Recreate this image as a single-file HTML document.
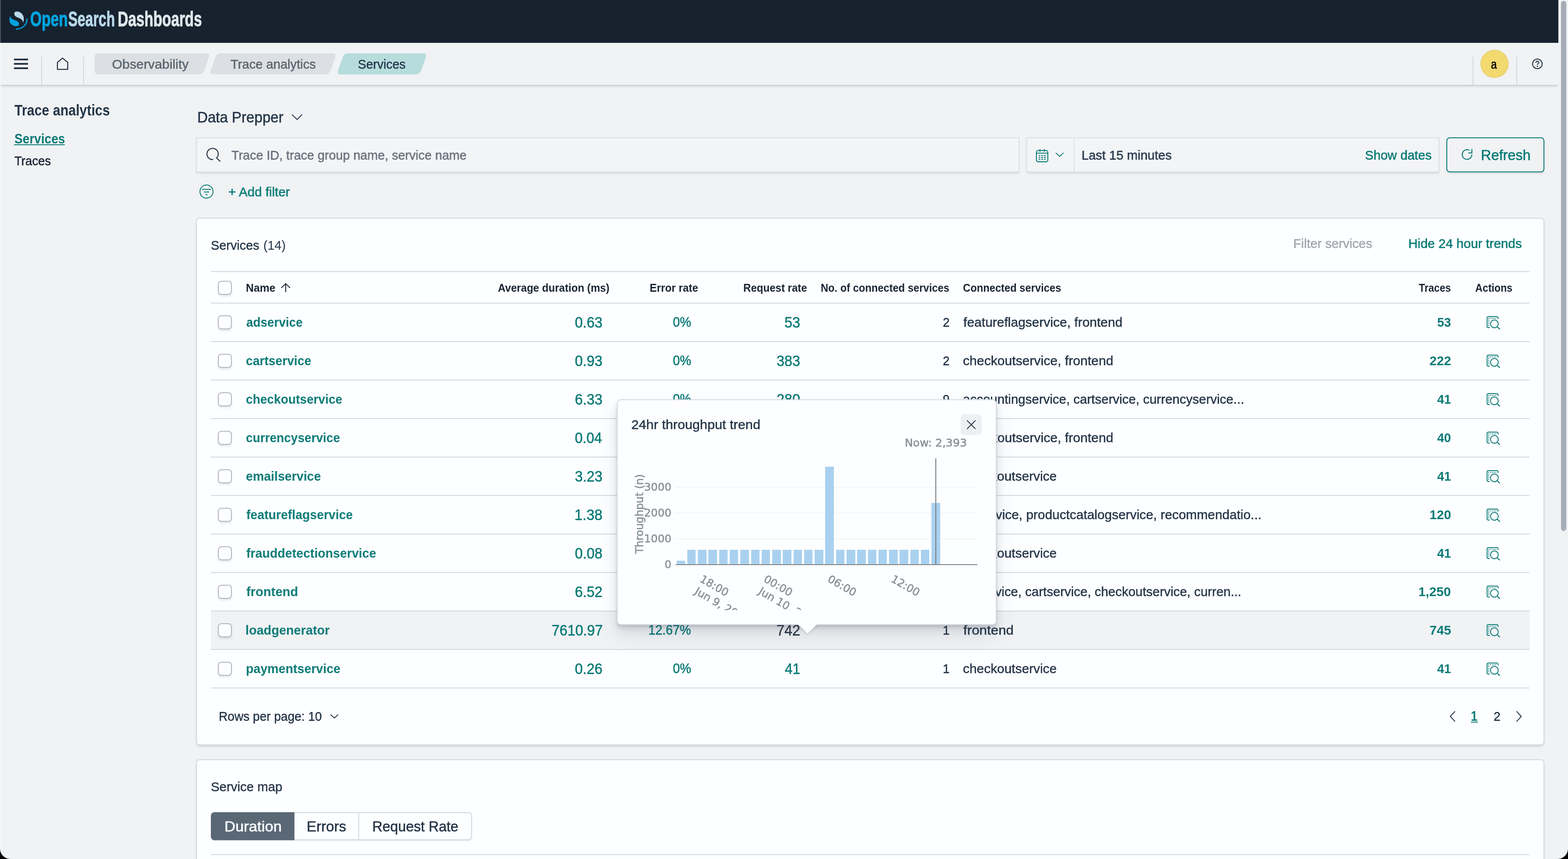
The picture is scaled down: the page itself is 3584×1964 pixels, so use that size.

<!DOCTYPE html>
<html lang="en">
<head>
<meta charset="utf-8">
<title>Services - Trace analytics - OpenSearch Dashboards</title>
<style>
html,body{margin:0;padding:0;}
body{width:3584px;height:1964px;overflow:hidden;position:relative;background:#f0f2f4;font-family:"Liberation Sans",sans-serif;color:#2a3947;}
*{box-sizing:border-box;}
#app{position:absolute;left:0;top:0;width:3584px;height:1964px;overflow:hidden;will-change:transform;transform:translateZ(0);}
.abs,.t,svg.i{position:absolute;}
.t{white-space:nowrap;display:block;margin:0;padding:0;font-weight:400;text-decoration:none;transform-origin:0 50%;}
.u{text-decoration:underline;text-decoration-thickness:2px;text-underline-offset:4px;}
#hdr1{position:absolute;left:0;top:0;width:3562px;height:98px;background:#17222f;}
#hdr1line{position:absolute;left:0;top:98px;width:3562px;height:1px;background:#fdfdfe;}
#hdr2{position:absolute;left:0;top:99px;width:3562px;height:95px;background:#f0f2f4;box-shadow:0 3px 4px -1px rgba(120,130,142,.32),0 2px 10px -3px rgba(120,130,142,.28);}
.vdiv{position:absolute;width:2px;background:#d3d7dc;top:130px;height:64px;}
.bc{position:absolute;top:122px;height:48px;}
.bc i{position:absolute;top:0;bottom:0;border-radius:8px;background:#dcdfe3;}
.bc.last i{background:#b7dcdc;}
.field{position:absolute;top:314px;height:80px;background:#f3f4f6;border:2px solid #dbe1e5;box-shadow:0 3px 3px -1px rgba(120,130,145,.16),0 5px 8px -3px rgba(120,130,145,.12);}
.panel{position:absolute;left:448px;width:3082px;background:#fdfeff;border:2px solid #d4d8dd;border-radius:8px;box-shadow:0 3px 4px -1px rgba(120,130,145,.22),0 6px 10px -6px rgba(120,130,145,.16);}
.hl{position:absolute;left:482px;width:3014px;height:2px;background:#d3d7dc;}
.cb{position:absolute;left:498px;width:32px;height:32px;border:2px solid #b3b6bd;border-radius:8px;background:#fdfeff;box-shadow:0 4px 5px -1px rgba(120,130,145,.22);}
.rowhl{position:absolute;left:482px;width:3014px;background:#f0f2f4;}
#pop{position:absolute;left:1410px;top:913px;width:868px;height:516px;background:#fdfeff;border:2px solid #d7dbe2;border-radius:9px;box-shadow:0 24px 48px 0 rgba(65,78,101,.10),0 12px 24px 0 rgba(65,78,101,.10),0 8px 8px 0 rgba(65,78,101,.10),0 4px 4px 0 rgba(65,78,101,.10);}
#poparrow{position:absolute;left:1824px;top:1427px;width:0;height:0;border-left:22px solid transparent;border-right:22px solid transparent;border-top:22px solid #fdfeff;filter:drop-shadow(0 3px 2px rgba(65,78,101,.18));}
#close{position:absolute;left:2196px;top:947px;width:48px;height:48px;border-radius:9px;background:#edf0f3;}
.bar{position:absolute;background:#a9d1ef;}
.xt{width:0;height:0;transform:rotate(30deg);transform-origin:0 0;font-family:'DejaVu Sans',sans-serif;font-size:24.5px;line-height:31px;color:#8a9499;white-space:nowrap;-webkit-text-stroke:0.7px #8a9499;}
.grid{position:absolute;left:1544px;width:690px;height:2px;background:#f3f4f6;}
.seg{position:absolute;top:1857px;height:64px;border:2px solid #d3d7dd;background:#fdfeff;box-shadow:0 3px 3px -1px rgba(120,130,145,.18);}
#sbtrack{position:absolute;left:3562px;top:0;width:22px;height:1964px;background:#f0f2f4;}
#sbthumb{position:absolute;left:3568px;top:2px;width:12px;height:1212px;border-radius:6px;background:#a6acb5;}
</style>
</head>
<body>
<div id="app">

<header id="hdr1"></header><div id="hdr1line"></div>
<div class="abs" style="left:0;top:0;width:2px;height:98px;background:#45515c"></div>
<svg class="i" style="left:20px;top:25px" width="44" height="44" viewBox="0 0 44 44">
<path transform="translate(0.7 0)" d="M13.5 2.2 C19 -0.5 27.5 2.5 31.5 9.5 C34.5 15 34.3 21.5 32 26.5 C31.2 21 28 18.5 23.5 16.5 C18.5 14.3 13.5 13 12.3 8.5 C11.7 6 12 3.5 13.5 2.2 Z" fill="#b9d9eb"/>
<path transform="translate(0.9 0.97) scale(1 0.912)" d="M3.5 11 C2.5 15 5 18.5 9.5 20.7 C14.5 23 20.5 24.5 22.3 29 C23.5 32 22.3 35 19.8 36.3 C13 38.6 5 35 2 28 C-0.3 22.5 0.3 16 3.5 11 Z" fill="#00a3e0"/>
<path d="M41.8 18 C42.3 30.6 32 41.2 17.4 41.7" fill="none" stroke="#00a3e0" stroke-width="2.7" stroke-linecap="round"/>
</svg>
<div class="abs" id="logotext" style="left:70px;top:0;height:98px;width:400px;font-weight:700;font-size:48px;line-height:56px;white-space:nowrap;-webkit-text-stroke:1.1px currentColor"><span class="abs lg" style="left:-1.22px;top:16.2px;color:#00a3e0;transform-origin:0 0;transform:scaleX(0.7007)">Open</span><span class="abs lg" style="left:85.50px;top:16.2px;color:#b9d9eb;transform-origin:0 0;transform:scaleX(0.6663)">Search</span><span class="abs lg" style="left:199.20px;top:16.2px;color:#dfe7ea;transform-origin:0 0;transform:scaleX(0.6939)">Dashboards</span></div>
<nav id="hdr2"></nav>
<div class="abs" style="left:0;top:99px;width:2px;height:1865px;background:#f5f6f8"></div>
<svg class="i" style="left:32px;top:134px" width="32" height="24" viewBox="0 0 32 24"><path d="M0 0h32v4H0zM0 10h32v4H0zM0 20h32v4H0z" fill="#253546"/></svg>
<div class="vdiv" style="left:94px"></div><div class="vdiv" style="left:190px"></div>
<svg class="i" style="left:128px;top:130px" width="30" height="32" viewBox="0 0 30 32"><path d="M3.2 28.6 V12.6 L15 2.9 L26.8 12.6 V28.6 Z" fill="none" stroke="#1f2f40" stroke-width="2.3" stroke-linejoin="round"/></svg>
<div class="bc" style="left:216px;width:263.6px"><i style="left:8.5px;right:8.5px;transform:skewX(-19.5deg)"></i><i style="left:0;width:60px"></i></div>
<div class="bc" style="left:478.7px;width:291.34999999999997px"><i style="left:8.5px;right:8.5px;transform:skewX(-19.5deg)"></i></div>
<div class="bc last" style="left:769.2px;width:206.69999999999993px"><i style="left:8.5px;right:8.5px;transform:skewX(-19.5deg)"></i></div>
<span class="t" style="left:255.79px;top:129px;font-size:30px;line-height:36px;transform:scaleX(1.0105);-webkit-text-stroke:0.51px currentColor;color:#59636e;">Observability</span>
<span class="t" style="left:527.40px;top:129px;font-size:30px;line-height:36px;transform:scaleX(0.9713);-webkit-text-stroke:0.51px currentColor;color:#59636e;">Trace analytics</span>
<span class="t" style="left:818.15px;top:129px;font-size:30px;line-height:36px;transform:scaleX(0.9484);-webkit-text-stroke:0.51px currentColor;color:#243548;">Services</span>
<div class="vdiv" style="left:3366px"></div><div class="vdiv" style="left:3466px"></div>
<div class="abs" style="left:3384px;top:114px;width:64px;height:64px;border-radius:50%;background:#f2d970;box-shadow:inset 0 0 0 1.5px rgba(200,170,40,.25)"></div>
<span class="t" style="left:3408.44px;top:129px;font-size:29.5px;line-height:35px;transform:scaleX(0.8063);-webkit-text-stroke:0.7px currentColor;color:#000;">a</span>
<svg class="i" style="left:3500px;top:132px" width="28" height="28" viewBox="0 0 28 28"><circle cx="14" cy="14" r="11" fill="none" stroke="#1f2f40" stroke-width="2"/><path d="M10.6 11.2 C10.6 9 12.1 7.9 14 7.9 C15.9 7.9 17.4 9 17.4 10.9 C17.4 13.3 14 13.3 14 16.2" fill="none" stroke="#1f2f40" stroke-width="2"/><circle cx="14" cy="19.6" r="1.5" fill="#1f2f40"/></svg>
<h2 class="t" style="left:32.70px;top:231px;font-size:35px;line-height:42px;transform:scaleX(0.8693);font-weight:700;color:#243548;">Trace analytics</h2>
<span class="t" style="left:32.75px;top:299px;font-size:30.5px;line-height:37px;transform:scaleX(0.9218);font-weight:700;color:#0a7a76;">Services</span>
<div class="abs" style="left:32px;top:330px;width:116px;height:2px;background:#0a7a76"></div>
<span class="t" style="left:32.75px;top:350px;font-size:30px;line-height:36px;transform:scaleX(0.9211);-webkit-text-stroke:0.51px currentColor;color:#16202e;">Traces</span>
<h1 class="t" style="left:450.68px;top:248px;font-size:34.5px;line-height:41px;transform:scaleX(0.9585);-webkit-text-stroke:0.59px currentColor;color:#243548;">Data Prepper</h1>
<svg class="i" style="left:664px;top:258px" width="30" height="20" viewBox="0 0 30 20"><path d="M3.9 4.5 L15 15.2 L26.1 4.5" fill="none" stroke="#243548" stroke-width="2" stroke-linejoin="round" stroke-linecap="round"/></svg>
<div class="field" style="left:448px;width:1882px"></div>
<svg class="i" style="left:470px;top:336px" width="36" height="36" viewBox="0 0 36 36"><path d="M17.2 28.85 A12.9 12.9 0 1 1 25.6 24.6" fill="none" stroke="#1f2f40" stroke-width="2.2"/><path d="M24.2 24.5 L33.6 33.2" fill="none" stroke="#1f2f40" stroke-width="2.2"/></svg>
<span class="t" style="left:528.50px;top:337px;font-size:30px;line-height:36px;transform:scaleX(0.9586);-webkit-text-stroke:0.51px currentColor;color:#666e7a;">Trace ID, trace group name, service name</span>
<div class="field" style="left:2346px;width:944px"></div>
<div class="abs" style="left:2454px;top:316px;width:2px;height:76px;background:#dde1e7"></div>
<svg class="i" style="left:2366px;top:339px" width="32" height="34" viewBox="0 0 32 34"><rect x="2.95" y="4.95" width="26.1" height="25.9" rx="4" fill="none" stroke="#0a7a76" stroke-width="2.1"/><path d="M3 11.2h26M11 2.1v5.8M21 2.1v5.8" fill="none" stroke="#0a7a76" stroke-width="2.1"/><path d="M8 17h4M14.05 17h4M20.1 17h4M8 21h4M14.05 21h4M20.1 21h4M8 25h4M14.05 25h4M20.1 25h4" fill="none" stroke="#0a7a76" stroke-width="2.1"/></svg>
<svg class="i" style="left:2410px;top:346px" width="24" height="16" viewBox="0 0 24 16"><path d="M3.6 3.9 L12 11.5 L20.4 3.9" fill="none" stroke="#0a7a76" stroke-width="1.9" stroke-linejoin="round" stroke-linecap="round"/></svg>
<span class="t" style="left:2471.65px;top:337px;font-size:30px;line-height:36px;transform:scaleX(0.9737);-webkit-text-stroke:0.51px currentColor;color:#243548;">Last 15 minutes</span>
<span class="t" style="left:3120.03px;top:337px;font-size:30px;line-height:36px;transform:scaleX(0.9711);-webkit-text-stroke:0.65px currentColor;color:#0a7a76;">Show dates</span>
<div class="abs" style="left:3306px;top:314px;width:224px;height:80px;border:2px solid #0a7a76;border-radius:8px;background:#f0f2f4;box-shadow:0 3px 4px -1px rgba(130,140,158,.3)"></div>
<svg class="i" style="left:3339px;top:338px" width="30" height="30" viewBox="0 0 30 30"><path d="M25.2 15.5 A11 11 0 1 1 19.5 5.6" fill="none" stroke="#0a7a76" stroke-width="2.2"/><path d="M17.2 11.6 H25.3 V2.6" fill="none" stroke="#0a7a76" stroke-width="2.2"/></svg>
<span class="t" style="left:3385.19px;top:334px;font-size:34px;line-height:41px;transform:scaleX(0.9527);-webkit-text-stroke:0.65px currentColor;color:#0a7a76;">Refresh</span>
<svg class="i" style="left:454px;top:420px" width="36" height="36" viewBox="0 0 36 36"><circle cx="18" cy="18" r="15" fill="none" stroke="#0a7a76" stroke-width="2"/><path d="M8 13h20M12 19h12M15.6 25h4.8" fill="none" stroke="#0a7a76" stroke-width="2"/></svg>
<span class="t" style="left:521.81px;top:421px;font-size:30px;line-height:36px;transform:scaleX(0.9864);-webkit-text-stroke:0.65px currentColor;color:#0a7a76;">+ Add filter</span>
<section class="panel" style="top:498px;height:1206px"></section>
<h3 class="t" style="left:482.24px;top:543px;font-size:30px;line-height:36px;transform:scaleX(0.9617);-webkit-text-stroke:0.51px currentColor;color:#243548;">Services</h3>
<span class="t" style="left:601.54px;top:543px;font-size:30px;line-height:36px;transform:scaleX(0.9580);color:#243548;">(14)</span>
<span class="t" style="left:2955.65px;top:539px;font-size:30px;line-height:36px;transform:scaleX(0.9757);-webkit-text-stroke:0.65px currentColor;color:#a3a8b0;">Filter services</span>
<span class="t" style="left:3219.03px;top:539px;font-size:30px;line-height:36px;transform:scaleX(0.9847);-webkit-text-stroke:0.65px currentColor;color:#0a7a76;">Hide 24 hour trends</span>
<div class="hl" style="top:620px"></div>
<div class="rowhl" style="top:1398px;height:86px"></div>
<div class="hl" style="top:692px"></div>
<div class="hl" style="top:780px"></div>
<div class="hl" style="top:868px"></div>
<div class="hl" style="top:956px"></div>
<div class="hl" style="top:1044px"></div>
<div class="hl" style="top:1132px"></div>
<div class="hl" style="top:1220px"></div>
<div class="hl" style="top:1308px"></div>
<div class="hl" style="top:1396px"></div>
<div class="hl" style="top:1484px"></div>
<div class="hl" style="top:1572px"></div>
<div class="cb" style="top:642px"></div>
<span class="t" style="left:562.24px;top:643px;font-size:26px;line-height:31px;transform:scaleX(0.9560);font-weight:700;color:#1a2533;">Name</span>
<svg class="i" style="left:640px;top:646px" width="26" height="24" viewBox="0 0 26 24"><path d="M13 22 V3 M3 12.2 L13 2.6 L23 12.2" fill="none" stroke="#1a2533" stroke-width="2.1"/></svg>
<span class="t" style="left:1137.80px;top:643px;font-size:26px;line-height:31px;transform:scaleX(0.9274);font-weight:700;color:#1a2533;">Average duration (ms)</span>
<span class="t" style="left:1484.76px;top:643px;font-size:26px;line-height:31px;transform:scaleX(0.9356);font-weight:700;color:#1a2533;">Error rate</span>
<span class="t" style="left:1698.57px;top:643px;font-size:26px;line-height:31px;transform:scaleX(0.9254);font-weight:700;color:#1a2533;">Request rate</span>
<span class="t" style="left:1876.09px;top:643px;font-size:26px;line-height:31px;transform:scaleX(0.9119);font-weight:700;color:#1a2533;">No. of connected services</span>
<span class="t" style="left:2201.19px;top:643px;font-size:26px;line-height:31px;transform:scaleX(0.9136);font-weight:700;color:#1a2533;">Connected services</span>
<span class="t" style="left:3243.30px;top:643px;font-size:26px;line-height:31px;transform:scaleX(0.8921);font-weight:700;color:#1a2533;">Traces</span>
<span class="t" style="left:3372.00px;top:643px;font-size:26px;line-height:31px;transform:scaleX(0.8916);font-weight:700;color:#1a2533;">Actions</span>
<div class="cb" style="top:721px"></div>
<span class="t" style="left:562.60px;top:719px;font-size:29.5px;line-height:35px;transform:scaleX(0.9453);font-weight:700;color:#0a7a76;">adservice</span>
<span class="t" style="left:1314.26px;top:717px;font-size:34.5px;line-height:41px;transform:scaleX(0.9390);-webkit-text-stroke:0.59px currentColor;color:#0a7a76;">0.63</span>
<span class="t" style="left:1537.77px;top:718px;font-size:31px;line-height:37px;transform:scaleX(0.9343);-webkit-text-stroke:0.65px currentColor;color:#0a7a76;">0%</span>
<span class="t" style="left:1792.56px;top:717px;font-size:34.5px;line-height:41px;transform:scaleX(0.9423);-webkit-text-stroke:0.59px currentColor;color:#0a7a76;">53</span>
<span class="t" style="left:2154.62px;top:719px;font-size:30px;line-height:36px;transform:scaleX(0.9300);-webkit-text-stroke:0.51px currentColor;color:#243548;">2</span>
<span class="t" style="left:2202.10px;top:719px;font-size:30px;line-height:36px;-webkit-text-stroke:0.51px currentColor;color:#243548;">featureflagservice, frontend</span>
<span class="t" style="left:3285.20px;top:719px;font-size:29.5px;line-height:35px;transform:scaleX(0.9628);font-weight:700;color:#0a7a76;">53</span>
<svg class="i" style="left:3397px;top:722px" width="33" height="33" viewBox="0 0 33 33"><path d="M8 27 H5.1 A3 3 0 0 1 2.1 24 V5 A3 3 0 0 1 5.1 2 H24.2 A3 3 0 0 1 27.2 5 V7.4" fill="none" stroke="#0a7a76" stroke-width="2"/><path d="M5 6.1h19" fill="none" stroke="#0a7a76" stroke-width="2" stroke-dasharray="2 2"/><path d="M5.9 9.1v14" fill="none" stroke="#0a7a76" stroke-width="2" stroke-dasharray="2 2"/><circle cx="18.7" cy="18.5" r="8.9" fill="none" stroke="#0a7a76" stroke-width="2"/><path d="M25 24.9 L31.3 31" fill="none" stroke="#0a7a76" stroke-width="2.2"/></svg>
<div class="cb" style="top:809px"></div>
<span class="t" style="left:561.64px;top:807px;font-size:29.5px;line-height:35px;transform:scaleX(0.9584);font-weight:700;color:#0a7a76;">cartservice</span>
<span class="t" style="left:1314.26px;top:805px;font-size:34.5px;line-height:41px;transform:scaleX(0.9390);-webkit-text-stroke:0.59px currentColor;color:#0a7a76;">0.93</span>
<span class="t" style="left:1537.77px;top:806px;font-size:31px;line-height:37px;transform:scaleX(0.9343);-webkit-text-stroke:0.65px currentColor;color:#0a7a76;">0%</span>
<span class="t" style="left:1774.66px;top:805px;font-size:34.5px;line-height:41px;transform:scaleX(0.9391);-webkit-text-stroke:0.59px currentColor;color:#0a7a76;">383</span>
<span class="t" style="left:2154.62px;top:807px;font-size:30px;line-height:36px;transform:scaleX(0.9300);-webkit-text-stroke:0.51px currentColor;color:#243548;">2</span>
<span class="t" style="left:2201.09px;top:807px;font-size:30px;line-height:36px;transform:scaleX(1.0054);-webkit-text-stroke:0.51px currentColor;color:#243548;">checkoutservice, frontend</span>
<span class="t" style="left:3267.60px;top:807px;font-size:29.5px;line-height:35px;font-weight:700;color:#0a7a76;">222</span>
<svg class="i" style="left:3397px;top:810px" width="33" height="33" viewBox="0 0 33 33"><path d="M8 27 H5.1 A3 3 0 0 1 2.1 24 V5 A3 3 0 0 1 5.1 2 H24.2 A3 3 0 0 1 27.2 5 V7.4" fill="none" stroke="#0a7a76" stroke-width="2"/><path d="M5 6.1h19" fill="none" stroke="#0a7a76" stroke-width="2" stroke-dasharray="2 2"/><path d="M5.9 9.1v14" fill="none" stroke="#0a7a76" stroke-width="2" stroke-dasharray="2 2"/><circle cx="18.7" cy="18.5" r="8.9" fill="none" stroke="#0a7a76" stroke-width="2"/><path d="M25 24.9 L31.3 31" fill="none" stroke="#0a7a76" stroke-width="2.2"/></svg>
<div class="cb" style="top:897px"></div>
<span class="t" style="left:561.65px;top:895px;font-size:29.5px;line-height:35px;transform:scaleX(0.9530);font-weight:700;color:#0a7a76;">checkoutservice</span>
<span class="t" style="left:1314.26px;top:893px;font-size:34.5px;line-height:41px;transform:scaleX(0.9390);-webkit-text-stroke:0.59px currentColor;color:#0a7a76;">6.33</span>
<span class="t" style="left:1537.77px;top:894px;font-size:31px;line-height:37px;transform:scaleX(0.9343);-webkit-text-stroke:0.65px currentColor;color:#0a7a76;">0%</span>
<span class="t" style="left:1774.66px;top:893px;font-size:34.5px;line-height:41px;transform:scaleX(0.9391);-webkit-text-stroke:0.59px currentColor;color:#0a7a76;">280</span>
<span class="t" style="left:2154.62px;top:895px;font-size:30px;line-height:36px;transform:scaleX(0.9300);-webkit-text-stroke:0.51px currentColor;color:#243548;">9</span>
<span class="t" style="left:2201.12px;top:895px;font-size:30px;line-height:36px;transform:scaleX(0.9836);-webkit-text-stroke:0.51px currentColor;color:#243548;">accountingservice, cartservice, currencyservice...</span>
<span class="t" style="left:3285.20px;top:895px;font-size:29.5px;line-height:35px;transform:scaleX(0.9628);font-weight:700;color:#0a7a76;">41</span>
<svg class="i" style="left:3397px;top:898px" width="33" height="33" viewBox="0 0 33 33"><path d="M8 27 H5.1 A3 3 0 0 1 2.1 24 V5 A3 3 0 0 1 5.1 2 H24.2 A3 3 0 0 1 27.2 5 V7.4" fill="none" stroke="#0a7a76" stroke-width="2"/><path d="M5 6.1h19" fill="none" stroke="#0a7a76" stroke-width="2" stroke-dasharray="2 2"/><path d="M5.9 9.1v14" fill="none" stroke="#0a7a76" stroke-width="2" stroke-dasharray="2 2"/><circle cx="18.7" cy="18.5" r="8.9" fill="none" stroke="#0a7a76" stroke-width="2"/><path d="M25 24.9 L31.3 31" fill="none" stroke="#0a7a76" stroke-width="2.2"/></svg>
<div class="cb" style="top:985px"></div>
<span class="t" style="left:561.65px;top:983px;font-size:29.5px;line-height:35px;transform:scaleX(0.9505);font-weight:700;color:#0a7a76;">currencyservice</span>
<span class="t" style="left:1314.28px;top:981px;font-size:34.5px;line-height:41px;transform:scaleX(0.9248);-webkit-text-stroke:0.59px currentColor;color:#0a7a76;">0.04</span>
<span class="t" style="left:1537.77px;top:982px;font-size:31px;line-height:37px;transform:scaleX(0.9343);-webkit-text-stroke:0.65px currentColor;color:#0a7a76;">0%</span>
<span class="t" style="left:1792.56px;top:981px;font-size:34.5px;line-height:41px;transform:scaleX(0.9423);-webkit-text-stroke:0.59px currentColor;color:#0a7a76;">80</span>
<span class="t" style="left:2154.62px;top:983px;font-size:30px;line-height:36px;transform:scaleX(0.9300);-webkit-text-stroke:0.51px currentColor;color:#243548;">2</span>
<span class="t" style="left:2201.09px;top:983px;font-size:30px;line-height:36px;transform:scaleX(1.0054);-webkit-text-stroke:0.51px currentColor;color:#243548;">checkoutservice, frontend</span>
<span class="t" style="left:3285.20px;top:983px;font-size:29.5px;line-height:35px;transform:scaleX(0.9628);font-weight:700;color:#0a7a76;">40</span>
<svg class="i" style="left:3397px;top:986px" width="33" height="33" viewBox="0 0 33 33"><path d="M8 27 H5.1 A3 3 0 0 1 2.1 24 V5 A3 3 0 0 1 5.1 2 H24.2 A3 3 0 0 1 27.2 5 V7.4" fill="none" stroke="#0a7a76" stroke-width="2"/><path d="M5 6.1h19" fill="none" stroke="#0a7a76" stroke-width="2" stroke-dasharray="2 2"/><path d="M5.9 9.1v14" fill="none" stroke="#0a7a76" stroke-width="2" stroke-dasharray="2 2"/><circle cx="18.7" cy="18.5" r="8.9" fill="none" stroke="#0a7a76" stroke-width="2"/><path d="M25 24.9 L31.3 31" fill="none" stroke="#0a7a76" stroke-width="2.2"/></svg>
<div class="cb" style="top:1073px"></div>
<span class="t" style="left:561.63px;top:1071px;font-size:29.5px;line-height:35px;transform:scaleX(0.9679);font-weight:700;color:#0a7a76;">emailservice</span>
<span class="t" style="left:1314.26px;top:1069px;font-size:34.5px;line-height:41px;transform:scaleX(0.9390);-webkit-text-stroke:0.59px currentColor;color:#0a7a76;">3.23</span>
<span class="t" style="left:1537.77px;top:1070px;font-size:31px;line-height:37px;transform:scaleX(0.9343);-webkit-text-stroke:0.65px currentColor;color:#0a7a76;">0%</span>
<span class="t" style="left:1793.50px;top:1069px;font-size:34.5px;line-height:41px;transform:scaleX(0.9170);-webkit-text-stroke:0.59px currentColor;color:#0a7a76;">41</span>
<span class="t" style="left:2154.62px;top:1071px;font-size:30px;line-height:36px;transform:scaleX(0.9300);-webkit-text-stroke:0.51px currentColor;color:#243548;">1</span>
<span class="t" style="left:2201.10px;top:1071px;font-size:30px;line-height:36px;transform:scaleX(0.9967);-webkit-text-stroke:0.51px currentColor;color:#243548;">checkoutservice</span>
<span class="t" style="left:3285.20px;top:1071px;font-size:29.5px;line-height:35px;transform:scaleX(0.9628);font-weight:700;color:#0a7a76;">41</span>
<svg class="i" style="left:3397px;top:1074px" width="33" height="33" viewBox="0 0 33 33"><path d="M8 27 H5.1 A3 3 0 0 1 2.1 24 V5 A3 3 0 0 1 5.1 2 H24.2 A3 3 0 0 1 27.2 5 V7.4" fill="none" stroke="#0a7a76" stroke-width="2"/><path d="M5 6.1h19" fill="none" stroke="#0a7a76" stroke-width="2" stroke-dasharray="2 2"/><path d="M5.9 9.1v14" fill="none" stroke="#0a7a76" stroke-width="2" stroke-dasharray="2 2"/><circle cx="18.7" cy="18.5" r="8.9" fill="none" stroke="#0a7a76" stroke-width="2"/><path d="M25 24.9 L31.3 31" fill="none" stroke="#0a7a76" stroke-width="2.2"/></svg>
<div class="cb" style="top:1161px"></div>
<span class="t" style="left:562.60px;top:1159px;font-size:29.5px;line-height:35px;transform:scaleX(0.9642);font-weight:700;color:#0a7a76;">featureflagservice</span>
<span class="t" style="left:1313.29px;top:1157px;font-size:34.5px;line-height:41px;transform:scaleX(0.9537);-webkit-text-stroke:0.59px currentColor;color:#0a7a76;">1.38</span>
<span class="t" style="left:1537.77px;top:1158px;font-size:31px;line-height:37px;transform:scaleX(0.9343);-webkit-text-stroke:0.65px currentColor;color:#0a7a76;">0%</span>
<span class="t" style="left:1773.69px;top:1157px;font-size:34.5px;line-height:41px;transform:scaleX(0.9563);-webkit-text-stroke:0.59px currentColor;color:#0a7a76;">120</span>
<span class="t" style="left:2154.62px;top:1159px;font-size:30px;line-height:36px;transform:scaleX(0.9300);-webkit-text-stroke:0.51px currentColor;color:#243548;">6</span>
<span class="t" style="left:2201.10px;top:1159px;font-size:30px;line-height:36px;transform:scaleX(0.9959);-webkit-text-stroke:0.51px currentColor;color:#243548;">adservice, productcatalogservice, recommendatio...</span>
<span class="t" style="left:3267.60px;top:1159px;font-size:29.5px;line-height:35px;font-weight:700;color:#0a7a76;">120</span>
<svg class="i" style="left:3397px;top:1162px" width="33" height="33" viewBox="0 0 33 33"><path d="M8 27 H5.1 A3 3 0 0 1 2.1 24 V5 A3 3 0 0 1 5.1 2 H24.2 A3 3 0 0 1 27.2 5 V7.4" fill="none" stroke="#0a7a76" stroke-width="2"/><path d="M5 6.1h19" fill="none" stroke="#0a7a76" stroke-width="2" stroke-dasharray="2 2"/><path d="M5.9 9.1v14" fill="none" stroke="#0a7a76" stroke-width="2" stroke-dasharray="2 2"/><circle cx="18.7" cy="18.5" r="8.9" fill="none" stroke="#0a7a76" stroke-width="2"/><path d="M25 24.9 L31.3 31" fill="none" stroke="#0a7a76" stroke-width="2.2"/></svg>
<div class="cb" style="top:1249px"></div>
<span class="t" style="left:562.60px;top:1247px;font-size:29.5px;line-height:35px;transform:scaleX(0.9677);font-weight:700;color:#0a7a76;">frauddetectionservice</span>
<span class="t" style="left:1314.26px;top:1245px;font-size:34.5px;line-height:41px;transform:scaleX(0.9390);-webkit-text-stroke:0.59px currentColor;color:#0a7a76;">0.08</span>
<span class="t" style="left:1537.77px;top:1246px;font-size:31px;line-height:37px;transform:scaleX(0.9343);-webkit-text-stroke:0.65px currentColor;color:#0a7a76;">0%</span>
<span class="t" style="left:1793.50px;top:1245px;font-size:34.5px;line-height:41px;transform:scaleX(0.9170);-webkit-text-stroke:0.59px currentColor;color:#0a7a76;">41</span>
<span class="t" style="left:2154.62px;top:1247px;font-size:30px;line-height:36px;transform:scaleX(0.9300);-webkit-text-stroke:0.51px currentColor;color:#243548;">1</span>
<span class="t" style="left:2201.10px;top:1247px;font-size:30px;line-height:36px;transform:scaleX(0.9967);-webkit-text-stroke:0.51px currentColor;color:#243548;">checkoutservice</span>
<span class="t" style="left:3285.20px;top:1247px;font-size:29.5px;line-height:35px;transform:scaleX(0.9628);font-weight:700;color:#0a7a76;">41</span>
<svg class="i" style="left:3397px;top:1250px" width="33" height="33" viewBox="0 0 33 33"><path d="M8 27 H5.1 A3 3 0 0 1 2.1 24 V5 A3 3 0 0 1 5.1 2 H24.2 A3 3 0 0 1 27.2 5 V7.4" fill="none" stroke="#0a7a76" stroke-width="2"/><path d="M5 6.1h19" fill="none" stroke="#0a7a76" stroke-width="2" stroke-dasharray="2 2"/><path d="M5.9 9.1v14" fill="none" stroke="#0a7a76" stroke-width="2" stroke-dasharray="2 2"/><circle cx="18.7" cy="18.5" r="8.9" fill="none" stroke="#0a7a76" stroke-width="2"/><path d="M25 24.9 L31.3 31" fill="none" stroke="#0a7a76" stroke-width="2.2"/></svg>
<div class="cb" style="top:1337px"></div>
<span class="t" style="left:562.60px;top:1335px;font-size:29.5px;line-height:35px;transform:scaleX(0.9899);font-weight:700;color:#0a7a76;">frontend</span>
<span class="t" style="left:1314.26px;top:1333px;font-size:34.5px;line-height:41px;transform:scaleX(0.9390);-webkit-text-stroke:0.59px currentColor;color:#0a7a76;">6.52</span>
<span class="t" style="left:1537.77px;top:1334px;font-size:31px;line-height:37px;transform:scaleX(0.9343);-webkit-text-stroke:0.65px currentColor;color:#0a7a76;">0%</span>
<span class="t" style="left:1755.80px;top:1333px;font-size:34.5px;line-height:41px;transform:scaleX(0.9502);-webkit-text-stroke:0.59px currentColor;color:#0a7a76;">1250</span>
<span class="t" style="left:2154.62px;top:1335px;font-size:30px;line-height:36px;transform:scaleX(0.9300);-webkit-text-stroke:0.51px currentColor;color:#243548;">9</span>
<span class="t" style="left:2201.12px;top:1335px;font-size:30px;line-height:36px;transform:scaleX(0.9813);-webkit-text-stroke:0.51px currentColor;color:#243548;">adservice, cartservice, checkoutservice, curren...</span>
<span class="t" style="left:3242.49px;top:1335px;font-size:29.5px;line-height:35px;transform:scaleX(1.0067);font-weight:700;color:#0a7a76;">1,250</span>
<svg class="i" style="left:3397px;top:1338px" width="33" height="33" viewBox="0 0 33 33"><path d="M8 27 H5.1 A3 3 0 0 1 2.1 24 V5 A3 3 0 0 1 5.1 2 H24.2 A3 3 0 0 1 27.2 5 V7.4" fill="none" stroke="#0a7a76" stroke-width="2"/><path d="M5 6.1h19" fill="none" stroke="#0a7a76" stroke-width="2" stroke-dasharray="2 2"/><path d="M5.9 9.1v14" fill="none" stroke="#0a7a76" stroke-width="2" stroke-dasharray="2 2"/><circle cx="18.7" cy="18.5" r="8.9" fill="none" stroke="#0a7a76" stroke-width="2"/><path d="M25 24.9 L31.3 31" fill="none" stroke="#0a7a76" stroke-width="2.2"/></svg>
<div class="cb" style="top:1425px"></div>
<span class="t" style="left:560.64px;top:1423px;font-size:29.5px;line-height:35px;transform:scaleX(0.9784);font-weight:700;color:#0a7a76;">loadgenerator</span>
<span class="t" style="left:1260.56px;top:1421px;font-size:34.5px;line-height:41px;transform:scaleX(0.9362);-webkit-text-stroke:0.59px currentColor;color:#0a7a76;">7610.97</span>
<span class="t" style="left:1482.45px;top:1422px;font-size:31px;line-height:37px;transform:scaleX(0.9242);-webkit-text-stroke:0.65px currentColor;color:#0a7a76;">12.67%</span>
<span class="t" style="left:1774.66px;top:1421px;font-size:34.5px;line-height:41px;transform:scaleX(0.9391);-webkit-text-stroke:0.59px currentColor;color:#2a3947;">742</span>
<span class="t" style="left:2154.62px;top:1423px;font-size:30px;line-height:36px;transform:scaleX(0.9300);-webkit-text-stroke:0.51px currentColor;color:#243548;">1</span>
<span class="t" style="left:2202.10px;top:1423px;font-size:30px;line-height:36px;transform:scaleX(1.0452);-webkit-text-stroke:0.51px currentColor;color:#243548;">frontend</span>
<span class="t" style="left:3267.60px;top:1423px;font-size:29.5px;line-height:35px;font-weight:700;color:#0a7a76;">745</span>
<svg class="i" style="left:3397px;top:1426px" width="33" height="33" viewBox="0 0 33 33"><path d="M8 27 H5.1 A3 3 0 0 1 2.1 24 V5 A3 3 0 0 1 5.1 2 H24.2 A3 3 0 0 1 27.2 5 V7.4" fill="none" stroke="#0a7a76" stroke-width="2"/><path d="M5 6.1h19" fill="none" stroke="#0a7a76" stroke-width="2" stroke-dasharray="2 2"/><path d="M5.9 9.1v14" fill="none" stroke="#0a7a76" stroke-width="2" stroke-dasharray="2 2"/><circle cx="18.7" cy="18.5" r="8.9" fill="none" stroke="#0a7a76" stroke-width="2"/><path d="M25 24.9 L31.3 31" fill="none" stroke="#0a7a76" stroke-width="2.2"/></svg>
<div class="cb" style="top:1513px"></div>
<span class="t" style="left:561.63px;top:1511px;font-size:29.5px;line-height:35px;transform:scaleX(0.9692);font-weight:700;color:#0a7a76;">paymentservice</span>
<span class="t" style="left:1314.26px;top:1509px;font-size:34.5px;line-height:41px;transform:scaleX(0.9390);-webkit-text-stroke:0.59px currentColor;color:#0a7a76;">0.26</span>
<span class="t" style="left:1537.77px;top:1510px;font-size:31px;line-height:37px;transform:scaleX(0.9343);-webkit-text-stroke:0.65px currentColor;color:#0a7a76;">0%</span>
<span class="t" style="left:1793.50px;top:1509px;font-size:34.5px;line-height:41px;transform:scaleX(0.9170);-webkit-text-stroke:0.59px currentColor;color:#0a7a76;">41</span>
<span class="t" style="left:2154.62px;top:1511px;font-size:30px;line-height:36px;transform:scaleX(0.9300);-webkit-text-stroke:0.51px currentColor;color:#243548;">1</span>
<span class="t" style="left:2201.10px;top:1511px;font-size:30px;line-height:36px;transform:scaleX(0.9967);-webkit-text-stroke:0.51px currentColor;color:#243548;">checkoutservice</span>
<span class="t" style="left:3285.20px;top:1511px;font-size:29.5px;line-height:35px;transform:scaleX(0.9628);font-weight:700;color:#0a7a76;">41</span>
<svg class="i" style="left:3397px;top:1514px" width="33" height="33" viewBox="0 0 33 33"><path d="M8 27 H5.1 A3 3 0 0 1 2.1 24 V5 A3 3 0 0 1 5.1 2 H24.2 A3 3 0 0 1 27.2 5 V7.4" fill="none" stroke="#0a7a76" stroke-width="2"/><path d="M5 6.1h19" fill="none" stroke="#0a7a76" stroke-width="2" stroke-dasharray="2 2"/><path d="M5.9 9.1v14" fill="none" stroke="#0a7a76" stroke-width="2" stroke-dasharray="2 2"/><circle cx="18.7" cy="18.5" r="8.9" fill="none" stroke="#0a7a76" stroke-width="2"/><path d="M25 24.9 L31.3 31" fill="none" stroke="#0a7a76" stroke-width="2.2"/></svg>
<span class="t" style="left:500.23px;top:1620px;font-size:30px;line-height:36px;transform:scaleX(0.9360);-webkit-text-stroke:0.51px currentColor;color:#243548;">Rows per page: 10</span>
<svg class="i" style="left:752px;top:1630px" width="26" height="18" viewBox="0 0 26 18"><path d="M4 4.3 L12.2 11.8 L20.4 4.3" fill="none" stroke="#243548" stroke-width="1.9" stroke-linejoin="round" stroke-linecap="round"/></svg>
<svg class="i" style="left:3310px;top:1624px" width="20" height="30" viewBox="0 0 20 30"><path d="M15.3 2.9 L5 14 L15.3 25.1" fill="none" stroke="#243548" stroke-width="2" stroke-linejoin="round" stroke-linecap="round"/></svg>
<span class="t" style="left:3362.32px;top:1619px;font-size:30.5px;line-height:37px;transform:scaleX(0.8812);font-weight:700;color:#0a7a76;">1</span>
<div class="abs" style="left:3362px;top:1650px;width:16px;height:2px;background:#0a7a76"></div>
<span class="t" style="left:3414.06px;top:1620px;font-size:30px;line-height:36px;transform:scaleX(0.9400);-webkit-text-stroke:0.51px currentColor;color:#243548;">2</span>
<svg class="i" style="left:3462px;top:1624px" width="20" height="30" viewBox="0 0 20 30"><path d="M4.9 2.9 L15.2 14 L4.9 25.1" fill="none" stroke="#243548" stroke-width="2" stroke-linejoin="round" stroke-linecap="round"/></svg>
<section class="panel" style="top:1736px;height:400px"></section>
<h3 class="t" style="left:482.22px;top:1781px;font-size:30px;line-height:36px;transform:scaleX(0.9803);-webkit-text-stroke:0.51px currentColor;color:#243548;">Service map</h3>
<div class="seg" style="left:482px;width:191px;background:#5a6876;border-color:#5a6876;border-radius:8px 0 0 8px"></div>
<div class="seg" style="left:673px;width:148px;border-left:none"></div>
<div class="seg" style="left:819px;width:260px;border-radius:0 8px 8px 0"></div>
<span class="t" style="left:512.76px;top:1869px;font-size:34px;line-height:41px;transform:scaleX(1.0192);-webkit-text-stroke:0.6px currentColor;color:#fdfeff;">Duration</span>
<span class="t" style="left:701.25px;top:1869px;font-size:34px;line-height:41px;transform:scaleX(0.9760);-webkit-text-stroke:0.6px currentColor;color:#243548;">Errors</span>
<span class="t" style="left:851.01px;top:1869px;font-size:34px;line-height:41px;transform:scaleX(0.9459);-webkit-text-stroke:0.6px currentColor;color:#243548;">Request Rate</span>
<div class="hl" style="top:1953px"></div>
<div id="pop" role="dialog"></div><div id="poparrow"></div>
<span class="t" style="left:1443.48px;top:953px;font-size:30px;line-height:36px;transform:scaleX(1.0222);-webkit-text-stroke:0.51px currentColor;color:#243548;">24hr throughput trend</span>
<div id="close"></div>
<svg class="i" style="left:2208px;top:959px" width="24" height="24" viewBox="0 0 24 24"><path d="M2.3 2.3 L21.7 21.7 M21.7 2.3 L2.3 21.7" fill="none" stroke="#2a3947" stroke-width="2"/></svg>
<span class="t" style="left:2068.25px;top:998px;font-size:24.5px;line-height:29px;transform:scaleX(1.0267);-webkit-text-stroke:0.7px currentColor;color:#8a9499;font-family:'DejaVu Sans', 'Liberation Sans', sans-serif;">Now: 2,393</span>
<div class="grid" style="top:1230.9px"></div>
<div class="grid" style="top:1171.8px"></div>
<div class="grid" style="top:1112.7px"></div>
<div class="bar" style="left:1546.60px;top:1281.54px;width:19.5px;height:9.46px"></div>
<div class="bar" style="left:1570.88px;top:1257.31px;width:19.5px;height:33.69px"></div>
<div class="bar" style="left:1595.15px;top:1257.31px;width:19.5px;height:33.69px"></div>
<div class="bar" style="left:1619.42px;top:1257.31px;width:19.5px;height:33.69px"></div>
<div class="bar" style="left:1643.70px;top:1257.31px;width:19.5px;height:33.69px"></div>
<div class="bar" style="left:1667.97px;top:1257.31px;width:19.5px;height:33.69px"></div>
<div class="bar" style="left:1692.25px;top:1257.31px;width:19.5px;height:33.69px"></div>
<div class="bar" style="left:1716.52px;top:1257.31px;width:19.5px;height:33.69px"></div>
<div class="bar" style="left:1740.80px;top:1257.31px;width:19.5px;height:33.69px"></div>
<div class="bar" style="left:1765.07px;top:1257.31px;width:19.5px;height:33.69px"></div>
<div class="bar" style="left:1789.35px;top:1257.31px;width:19.5px;height:33.69px"></div>
<div class="bar" style="left:1813.62px;top:1257.31px;width:19.5px;height:33.69px"></div>
<div class="bar" style="left:1837.90px;top:1257.31px;width:19.5px;height:33.69px"></div>
<div class="bar" style="left:1862.17px;top:1257.31px;width:19.5px;height:33.69px"></div>
<div class="bar" style="left:1886.45px;top:1067.01px;width:19.5px;height:223.99px"></div>
<div class="bar" style="left:1910.72px;top:1257.31px;width:19.5px;height:33.69px"></div>
<div class="bar" style="left:1935.00px;top:1257.31px;width:19.5px;height:33.69px"></div>
<div class="bar" style="left:1959.27px;top:1257.31px;width:19.5px;height:33.69px"></div>
<div class="bar" style="left:1983.55px;top:1257.31px;width:19.5px;height:33.69px"></div>
<div class="bar" style="left:2007.82px;top:1257.31px;width:19.5px;height:33.69px"></div>
<div class="bar" style="left:2032.10px;top:1257.31px;width:19.5px;height:33.69px"></div>
<div class="bar" style="left:2056.38px;top:1257.31px;width:19.5px;height:33.69px"></div>
<div class="bar" style="left:2080.65px;top:1257.31px;width:19.5px;height:33.69px"></div>
<div class="bar" style="left:2104.92px;top:1257.31px;width:19.5px;height:33.69px"></div>
<div class="bar" style="left:2129.20px;top:1149.57px;width:19.5px;height:141.43px"></div>
<div class="abs" style="left:1544px;top:1290.0px;width:690px;height:2px;background:#7d8286"></div>
<div class="abs" style="left:2138px;top:1048px;width:2px;height:243px;background:#73787c"></div>
<span class="t" style="left:1519.00px;top:1276px;font-size:24.5px;line-height:29px;-webkit-text-stroke:0.7px currentColor;color:#8a9499;font-family:'DejaVu Sans', 'Liberation Sans', sans-serif;">0</span>
<span class="t" style="left:1472.24px;top:1217px;font-size:24.5px;line-height:29px;-webkit-text-stroke:0.7px currentColor;color:#8a9499;font-family:'DejaVu Sans', 'Liberation Sans', sans-serif;">1000</span>
<span class="t" style="left:1472.24px;top:1158px;font-size:24.5px;line-height:29px;-webkit-text-stroke:0.7px currentColor;color:#8a9499;font-family:'DejaVu Sans', 'Liberation Sans', sans-serif;">2000</span>
<span class="t" style="left:1472.24px;top:1099px;font-size:24.5px;line-height:29px;-webkit-text-stroke:0.7px currentColor;color:#8a9499;font-family:'DejaVu Sans', 'Liberation Sans', sans-serif;">3000</span>
<div class="abs" style="left:1461px;top:1175px;width:0;height:0"><span class="t" style="left:-92.5px;top:-15px;width:185px;text-align:center;font-family:'DejaVu Sans',sans-serif;font-size:24.5px;line-height:30px;color:#8a9499;transform:rotate(-90deg);transform-origin:50% 50%;letter-spacing:-0.2px;-webkit-text-stroke:0.7px #8a9499">Throughput (n)</span></div>
<div class="abs" style="left:1412px;top:1293px;width:864px;height:102px;overflow:hidden">
<div class="abs xt" style="left:198.4px;top:14.5px"><span class="abs" style="left:0;top:0">18:00</span><span class="abs" style="left:3.7px;top:30.2px">Jun 9, 2025</span></div>
<div class="abs xt" style="left:344.4px;top:14.5px"><span class="abs" style="left:0;top:0">00:00</span><span class="abs" style="left:3.7px;top:30.2px">Jun 10, 2025</span></div>
<div class="abs xt" style="left:490.4px;top:14.5px"><span class="abs" style="left:0;top:0">06:00</span></div>
<div class="abs xt" style="left:635.4px;top:14.5px"><span class="abs" style="left:0;top:0">12:00</span></div>
</div>
<div id="sbtrack"></div><div id="sbthumb"></div>
<svg class="i" style="left:0;top:1940px" width="24" height="24" viewBox="0 0 24 24"><path d="M0 0 A24 24 0 0 0 24 24 H0 Z" fill="#050505"/></svg>
<svg class="i" style="left:3560px;top:1940px" width="24" height="24" viewBox="0 0 24 24"><path d="M24 0 A24 24 0 0 1 0 24 H24 Z" fill="#050505"/></svg>
</div>
<script>(function(){var w=window.innerWidth;if(w&&Math.abs(w-3584)>100){var a=document.getElementById("app");a.style.transformOrigin="0 0";a.style.transform="scale("+(w/3584)+")";}})();</script>
</body>
</html>
